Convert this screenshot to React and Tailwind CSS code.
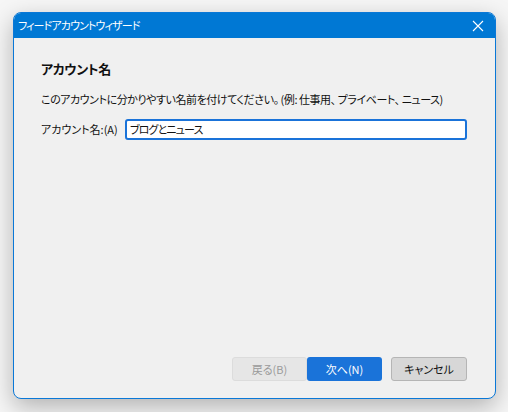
import React from "react";

export default function App() {
  const font = { fontFamily: '"Noto Sans CJK JP", "Noto Sans", sans-serif' };
  return (
    <div className="w-[508px] h-[412px] bg-[#f6f6f6] pt-[12px] pl-[13px] [font-feature-settings:'palt']" style={font}>
      <div className="w-[483px] h-[387px] rounded-[8px] border border-[#0a78d7] bg-[#f0f0f0] flex flex-col overflow-hidden shadow-[0_8px_24px_rgba(0,0,0,0.28)]">
        <div className="h-[25px] bg-[#0078d4] flex items-center justify-between pl-[4px] pr-[10px] shrink-0">
          <span className="text-white text-[11px] leading-none whitespace-nowrap tracking-[-0.9px]">フィードアカウントウィザード</span>
          <svg width="12" height="12" viewBox="0 0 12 12" className="mr-[1px]">
            <path d="M1 1 L11 11 M11 1 L1 11" stroke="white" strokeWidth="1.1" />
          </svg>
        </div>
        <div className="flex-1 flex flex-col px-[27px] pt-[22px]">
          <div className="text-[13px] font-bold text-[#111] leading-[18px] whitespace-nowrap tracking-[-0.4px]">アカウント名</div>
          <div className="mt-[13px] text-[11px] text-[#111] leading-[16px] whitespace-nowrap tracking-[-0.45px]">
            このアカウントに分かりやすい名前を付けてください。 (例: 仕事用、 プライベート、 ニュース)
          </div>
          <div className="mt-[12px] flex items-center">
            <span className="text-[11px] text-[#111] w-[84px] whitespace-nowrap">アカウント名:(A)</span>
            <div className="w-[342px] h-[21px] border-2 border-[#1a73d9] rounded-[3px] bg-white flex items-center pl-[3px] text-[11px] text-[#111] whitespace-nowrap tracking-[-0.9px]">
              ブログとニュース
            </div>
          </div>
          <div className="flex-1" />
          <div className="flex justify-end items-center pb-[17px] pr-[1px]">
            <div className="w-[75px] h-[24px] bg-[#e6e6e6] border border-[#dcdcdc] rounded-[3px] text-[11px] text-[#9a9a9a] flex items-center justify-center">戻る(B)</div>
            <div className="w-[75px] h-[24px] bg-[#1a73d9] rounded-[3px] text-[11px] text-white flex items-center justify-center">次へ(N)</div>
            <div className="ml-[9px] w-[76px] h-[24px] bg-[#d7d7d7] border border-[#b5b5b5] rounded-[3px] text-[11px] text-[#111] flex items-center justify-center">キャンセル</div>
          </div>
        </div>
      </div>
    </div>
  );
}
